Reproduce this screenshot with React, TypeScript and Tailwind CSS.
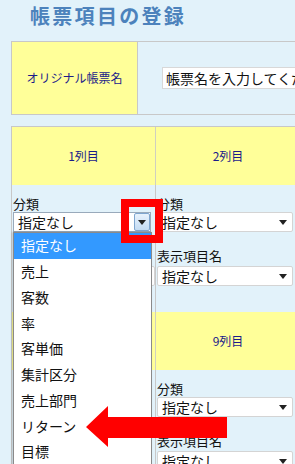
import React from 'react';

const jp = { fontFamily: '"Noto Sans CJK JP", "Noto Sans", sans-serif' };

const options = ['指定なし', '売上', '客数', '率', '客単価', '集計区分', '売上部門', 'リターン', '目標'];

function Caret() {
    return (
        <svg width="8" height="5" viewBox="0 0 8 5" className="shrink-0">
            <path d="M0 0 L8 0 L4 5 Z" fill="#222" />
        </svg>
    );
}

function PlainSelect({ className = '' }: { className?: string }) {
    return (
        <div className={`flex h-[20px] items-center justify-between rounded-[2px] border border-[#d4d4d4] bg-white pl-[4px] pr-[5px] ${className}`}>
            <span className="text-[14px] leading-none text-[#111]">指定なし</span>
            <Caret />
        </div>
    );
}

function ColumnBody({ open }: { open?: boolean }) {
    return (
        <div className="flex flex-col pt-[11px]">
            <span className="text-[13px] leading-[16px] text-[#111]">分類</span>
            {open ? (
                <div className="relative mr-[4px] flex h-[20px] items-center justify-between border border-[#9ab] bg-white pl-[4px]">
                    <span className="text-[14px] leading-none text-[#111]">指定なし</span>
                    <div className="flex h-[18px] w-[16px] items-center justify-center rounded-[2px] border border-[#7fa6cf] bg-gradient-to-b from-[#e8f2fc] to-[#c4dcf3]">
                        <Caret />
                    </div>
                    {/* open list */}
                    <div className="absolute left-[-1px] top-[19px] z-10 h-[240px] w-[139px] border border-[#8a8a8a] bg-white shadow-[-1px_0_2px_rgba(0,0,0,0.2)]">
                        {options.map((o, i) => (
                            <div
                                key={o}
                                className={`flex h-[25.75px] items-center pl-[7px] text-[14px] ${i === 0 ? 'bg-[#3399ff] text-white' : 'text-[#111]'}`}
                            >
                                {o}
                            </div>
                        ))}
                    </div>
                </div>
            ) : (
                <PlainSelect />
            )}
            <span className="mt-[16px] text-[13px] leading-[16px] text-[#111]">表示項目名</span>
            <PlainSelect className="mt-[2px]" />
        </div>
    );
}

function HeaderRow({ left, right }: { left: string; right: string }) {
    return (
        <div className="flex h-[58px] bg-[#ffff99] text-[12px] text-[#1c1c8a]">
            <div className="flex w-[144px] items-center justify-center border-r border-[#d0d0c0]">{left}</div>
            <div className="flex w-[144px] items-center justify-center">{right}</div>
        </div>
    );
}

export default function App() {
    return (
        <div className="relative h-[464px] w-[295px] overflow-hidden bg-[#e2f2fa]" style={jp}>
            <div className="h-[41px] pl-[30px] pt-[4px] text-[20px] font-bold leading-[24px] tracking-[2.3px] text-[#4c82bc]">
                帳票項目の登録
            </div>

            <div className="ml-[11px] flex h-[74px] w-[420px] border border-[#c8c8c8]">
                <div className="flex w-[126px] items-center justify-center border-r border-[#c8c8c8] bg-[#ffff99] text-[12px] text-[#1c1c8a]">
                    オリジナル帳票名
                </div>
                <div className="flex flex-1 items-center pl-[24px]">
                    <div className="flex h-[22px] w-[220px] items-center overflow-hidden whitespace-nowrap border border-[#d8d8d8] bg-white pl-[3px] text-[14px] text-[#111]">
                        帳票名を入力してください
                    </div>
                </div>
            </div>

            <div className="ml-[11px] mt-[11px] w-[420px] border border-[#c8c8c8]">
                <HeaderRow left="1列目" right="2列目" />
                <div className="flex h-[127px]">
                    <div className="w-[144px] border-r border-[#c8c8c8] pl-[1px]">
                        <ColumnBody open />
                    </div>
                    <div className="w-[137px] pl-[1px]">
                        <ColumnBody />
                    </div>
                </div>
                {/* left cells of this row sit under the open list */}
                <HeaderRow left="" right="9列目" />
                <div className="flex h-[127px]">
                    <div className="w-[144px] border-r border-[#c8c8c8]" />
                    <div className="w-[137px] pl-[1px]">
                        <ColumnBody />
                    </div>
                </div>
            </div>

            {/* annotations */}
            <div className="absolute left-[121px] top-[199px] z-20 h-[44px] w-[42px] border-[8px] border-[#ff0000]" />
            <svg className="absolute left-[86px] top-[406px] z-20" width="141" height="41" viewBox="0 0 141 41">
                <polygon points="0,21 22,0 22,11 141,11 141,32 22,32 22,41" fill="#ff0000" />
            </svg>
        </div>
    );
}
